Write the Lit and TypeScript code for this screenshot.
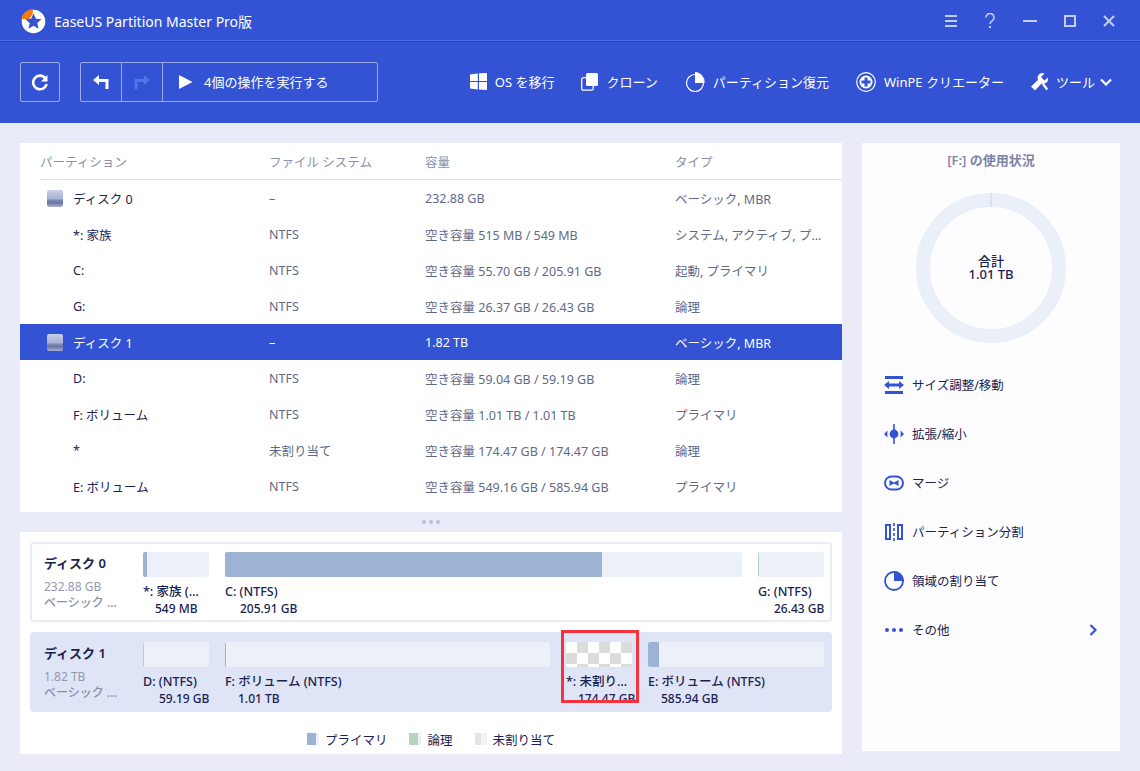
import { LitElement, html, css, svg } from "lit";
import { customElement } from "lit/decorators.js";

const tree = [
  { n: "ディスク 0", f: "–", c: "232.88 GB", t: "ベーシック, MBR", disk: true },
  { n: "*: 家族", f: "NTFS", c: "空き容量 515 MB / 549 MB", t: "システム, アクティブ, プライマリ" },
  { n: "C:", f: "NTFS", c: "空き容量 55.70 GB / 205.91 GB", t: "起動, プライマリ" },
  { n: "G:", f: "NTFS", c: "空き容量 26.37 GB / 26.43 GB", t: "論理" },
  { n: "ディスク 1", f: "–", c: "1.82 TB", t: "ベーシック, MBR", disk: true, sel: true },
  { n: "D:", f: "NTFS", c: "空き容量 59.04 GB / 59.19 GB", t: "論理" },
  { n: "F: ボリューム", f: "NTFS", c: "空き容量 1.01 TB / 1.01 TB", t: "プライマリ" },
  { n: "*", f: "未割り当て", c: "空き容量 174.47 GB / 174.47 GB", t: "論理" },
  { n: "E: ボリューム", f: "NTFS", c: "空き容量 549.16 GB / 585.94 GB", t: "プライマリ" },
];

type Seg = { w: number; fill: number; color: string; n: string; s: string; ind: number; un?: boolean; mark?: boolean };
const disks: { name: string; size: string; sel: boolean; segs: Seg[] }[] = [
  {
    name: "ディスク 0", size: "232.88 GB", sel: false,
    segs: [
      { w: 66, fill: 4, color: "#9db3d4", n: "*: 家族 (…", s: "549 MB", ind: 12 },
      { w: 517, fill: 377, color: "#9db3d4", n: "C: (NTFS)", s: "205.91 GB", ind: 15 },
      { w: 66, fill: 1, color: "#b9d1c0", n: "G: (NTFS)", s: "26.43 GB", ind: 16 },
    ],
  },
  {
    name: "ディスク 1", size: "1.82 TB", sel: true,
    segs: [
      { w: 66, fill: 1, color: "#b9d1c0", n: "D: (NTFS)", s: "59.19 GB", ind: 16 },
      { w: 325, fill: 1, color: "#9db3d4", n: "F: ボリューム (NTFS)", s: "1.01 TB", ind: 13 },
      { w: 66, fill: 0, color: "", n: "*: 未割り…", s: "174.47 GB", ind: 12, un: true, mark: true },
      { w: 176, fill: 11, color: "#9db3d4", n: "E: ボリューム (NTFS)", s: "585.94 GB", ind: 13 },
    ],
  },
];

const ic = (w: number, h: number, body: unknown) =>
  html`<svg width=${w} height=${h} viewBox="0 0 ${w} ${h}">${body}</svg>`;

const actionIcons = [
  ic(20, 20, svg`<g fill="#3353d4"><rect x="1" y="1" width="18" height="3"/><rect x="1" y="16" width="18" height="3"/><path d="M0 10l5-4v2.6h10V6l5 4-5 4v-2.6H5V14z"/></g>`),
  ic(20, 20, svg`<g fill="#3353d4"><rect x="9.2" y="0" width="1.6" height="20"/><circle cx="10" cy="10" r="4.4"/><path d="M0 10l3.4-3.6v7.2zM20 10l-3.4-3.6v7.2z"/></g>`),
  ic(20, 20, svg`<rect x="1" y="3.5" width="18" height="13" rx="6.5" fill="none" stroke="#3353d4" stroke-width="2"/><path d="M5.5 7v6l4-2.2h1l4 2.2V7l-4 2.2h-1z" fill="#3353d4"/>`),
  ic(20, 20, svg`<g fill="#3353d4"><path d="M1 2h6v16H1zM3 4v12h2V4z" fill-rule="evenodd"/><path d="M13 2h6v16h-6zM15 4v12h2V4z" fill-rule="evenodd"/><rect x="9.2" y="1" width="1.6" height="3"/><rect x="9.2" y="6" width="1.6" height="3"/><rect x="9.2" y="11" width="1.6" height="3"/><rect x="9.2" y="16" width="1.6" height="3"/></g>`),
  ic(20, 20, svg`<circle cx="10" cy="10" r="9" fill="none" stroke="#3353d4" stroke-width="1.8"/><path d="M10 10V0a10 10 0 0 1 10 10z" fill="#3353d4"/>`),
  ic(20, 20, svg`<g fill="#3353d4"><circle cx="3" cy="10" r="2"/><circle cx="10" cy="10" r="2"/><circle cx="17" cy="10" r="2"/></g>`),
];
const actions = ["サイズ調整/移動", "拡張/縮小", "マージ", "パーティション分割", "領域の割り当て", "その他"];

@customElement("app-root")
export class AppRoot extends LitElement {
  static styles = css`
    :host { display: block; width: 1140px; height: 771px; overflow: hidden; background: #e9ecf8;
      font-family: "Noto Sans", "Noto Sans CJK JP", sans-serif; font-size: 12.5px; color: #1a2350; }
    svg { display: block; flex: none; }
    .head { background: #3353d4; color: #fff; height: 123px; display: flex; flex-direction: column; }
    .titlebar { height: 41px; flex: none; display: flex; align-items: center; padding: 2px 20px 0 20px; box-sizing: border-box;
      border-bottom: 1px solid #4c6ce4; box-shadow: 0 1px 0 #2a45b8; }
    .title { margin-left: 8px; font-size: 14px; flex: 1; }
    .wc { display: flex; align-items: center; gap: 27px; margin-right: 5px; }
    .toolbar { flex: 1; display: flex; align-items: center; padding: 0 28px 1px 20px; }
    .btn { border: 1px solid rgba(255,255,255,.5); border-radius: 2px; height: 40px; box-sizing: border-box; display: flex; align-items: center; }
    .refresh { width: 40px; justify-content: center; margin-right: 20px; }
    .seg-b { width: 41px; height: 100%; display: flex; align-items: center; justify-content: center; border-right: 1px solid rgba(255,255,255,.5); box-sizing: border-box; }
    .run { width: 214px; display: flex; align-items: center; gap: 11px; padding-left: 16px; box-sizing: border-box; font-size: 13px; }
    .tools { margin-left: auto; display: flex; align-items: center; }
    .tool { display: flex; align-items: center; gap: 8px; font-size: 13px; margin-left: 27px; }
    .main { height: 648px; padding: 20px; box-sizing: border-box; display: flex; gap: 20px; }
    .left { width: 822px; display: flex; flex-direction: column; }
    .table { background: #fff; height: 369px; flex: none; }
    .row, .thead { display: grid; grid-template-columns: 229px 156px 250px 1fr; padding-left: 20px; align-items: center; }
    .thead { height: 37px; color: #8a90a8; position: relative; }
    .rule { height: 1px; margin: -1px 0 0 20px; background: #dfe1ec; }
    .row { height: 36px; color: #5f6a8a; }
    .row .name { color: #1a2350; display: flex; align-items: center; padding-left: 33px; position: relative; gap: 10px; }
    .row.disk .name { padding-left: 7px; }
    .row.sel { background: #3353d4; color: #fff; }
    .row.sel .name { color: #fff; }
    .row .type { padding-right: 12px; white-space: nowrap; overflow: hidden; text-overflow: ellipsis; }
    .hd { width: 16px; height: 17px; border-radius: 2px; background: linear-gradient(#c9d0ea 0%, #a9b2d6 50%, #7a85b4 62%, #6a759f 75%, #a9b2d6 100%); }
    .split { height: 20px; flex: none; display: flex; align-items: center; justify-content: center; gap: 3px; }
    .split i { width: 4px; height: 4px; border-radius: 50%; background: #b9bed2; }
    .bottom { background: #fff; flex: 1; padding: 10px 10px 0; display: flex; flex-direction: column; gap: 10px; }
    .card { height: 80px; box-sizing: border-box; border: 2px solid #ebedf6; border-radius: 4px; display: flex; padding: 8px 6px 0 12px; }
    .card.sel { background: #e0e4f7; border-color: #e0e4f7; }
    .info { width: 99px; flex: none; }
    .dname { font-weight: 600; font-size: 13px; height: 26px; padding-top: 1px; box-sizing: border-box; line-height: 20px; }
    .dsize { color: #9499b0; line-height: 16px; font-size: 12px; margin-top: 1px; }
    .dtype { color: #8a90a8; line-height: 16px; font-size: 12px; font-weight: 500; }
    .segs { display: flex; gap: 16px; }
    .seg { position: relative; }
    .bar { height: 25px; background: #ecf0f9; border-radius: 2px; overflow: hidden; }
    .bar i { display: block; height: 100%; }
    .bar.un { background: repeating-conic-gradient(#dcdcdc 0 25%, #fff 0 50%) 0 0 / 22px 22px; }
    .sn { font-weight: 500; font-size: 12.5px; line-height: 16px; margin-top: 7px; white-space: nowrap; }
    .ss { font-weight: 500; font-size: 12px; line-height: 16px; margin-top: 1px; white-space: nowrap; }
    .mark { position: absolute; left: -5px; right: -7px; top: -12px; height: 73px; box-sizing: border-box; border: 3px solid #f5333f; }
    .legend { display: flex; justify-content: center; align-items: center; height: 30px; margin-top: 2px; }
    .lg { display: flex; align-items: center; gap: 6px; margin-right: 22px; }
    .lg:last-child { margin-right: 0; }
    .lg i { width: 12px; height: 12px; }
    .right { width: 258px; background: #fdfdff; display: flex; flex-direction: column; align-items: stretch; }
    .rt { text-align: center; font-weight: 600; color: #7d84a3; font-size: 13px; padding-top: 8px; line-height: 18px; }
    .donut { width: 150px; height: 150px; margin: 24px auto 0; position: relative; display: flex; flex-direction: column; align-items: center; justify-content: center; font-size: 13px; line-height: 13px; font-weight: 500; }
    .donut svg { position: absolute; inset: 0; }
    .acts { margin-top: 17px; padding: 0 22px; }
    .act { height: 49px; display: flex; align-items: center; gap: 8px; }
    .act span { flex: 1; }
  `;

  render() {
    return html`
      <div class="head">
        <div class="titlebar">
          ${ic(26, 26, svg`<circle cx="13.5" cy="13.5" r="11.8" fill="#fff"/><path d="M1 11A12.5 12.5 0 0 1 13 1l-.5 5.5L9 11z" fill="#f47a10"/><path d="M13.5 5.5l2.4 5.2 5.6.6-4.2 3.8 1.2 5.6-5-2.9-5 2.9 1.2-5.6-4.2-3.8 5.6-.6z" fill="#3353d4"/>`)}
          <span class="title">EaseUS Partition Master Pro版</span>
          <div class="wc">
            ${ic(12, 12, svg`<g fill="#c3cdf2"><rect y="0" width="12" height="2"/><rect y="5" width="12" height="2"/><rect y="10" width="12" height="2"/></g>`)}
            ${ic(12, 16, svg`<path d="M2 4.5A4 4 0 1 1 8.5 7.5C7 8.6 6 9.3 6 11" fill="none" stroke="#c3cdf2" stroke-width="1.6"/><rect x="5" y="13" width="2" height="2" fill="#c3cdf2"/>`)}
            ${ic(14, 2, svg`<rect width="14" height="2" fill="#c3cdf2"/>`)}
            ${ic(12, 12, svg`<rect x="1" y="1" width="10" height="10" fill="none" stroke="#c3cdf2" stroke-width="2"/>`)}
            ${ic(12, 12, svg`<path d="M1 1l10 10M11 1L1 11" stroke="#c3cdf2" stroke-width="2"/>`)}
          </div>
        </div>
        <div class="toolbar">
          <div class="btn refresh">
            ${ic(18, 18, svg`<path d="M14.5 5.5A6.8 6.8 0 1 0 15.6 11" fill="none" stroke="#fff" stroke-width="2.6"/><path d="M16.5 2v6.5H10z" fill="#fff"/>`)}
          </div>
          <div class="btn">
            <div class="seg-b">${ic(18, 16, svg`<path d="M7 1L1 6l6 5V8h6.5v7H16.5V5H7z" fill="#fff"/>`)}</div>
            <div class="seg-b">${ic(18, 16, svg`<path d="M11 1l6 5-6 5V8H4.500v7H1.500V5H11z" fill="#5473e6"/>`)}</div>
            <div class="run">${ic(14, 14, svg`<path d="M0 0l13.500 7L0 14z" fill="#fff"/>`)}<span>4個の操作を実行する</span></div>
          </div>
          <div class="tools">
            <div class="tool">${ic(17, 17, svg`<g fill="#fff"><path d="M0 1.500L7.800.5v7.500H0zM9 .3L17 0v8H9zM0 9h7.800v7.500L0 15.500zM9 9h8v8l-8-.5z"/></g>`)}<span>OS を移行</span></div>
            <div class="tool">${ic(17, 18, svg`<rect x=".7" y="4.700" width="11.500" height="12.500" rx="1.500" fill="none" stroke="#fff" stroke-width="1.300"/><rect x="5" y="0" width="12" height="13" rx="1.500" fill="#fff"/>`)}<span>クローン</span></div>
            <div class="tool">${ic(20, 20, svg`<circle cx="10" cy="11" r="8.500" fill="none" stroke="#fff" stroke-width="1.200"/><path d="M10 11V0a10 10 0 0 1 9.500 11z" fill="#fff"/>`)}<span>パーティション復元</span></div>
            <div class="tool">${ic(20, 20, svg`<circle cx="10" cy="10" r="9.300" fill="none" stroke="#fff" stroke-width="1.200"/><circle cx="10" cy="10" r="6.500" fill="#fff"/><path d="M8.500 5.500h3v3h3v3h-3v3h-3v-3h-3v-3h3z" fill="#3353d4"/>`)}<span>WinPE クリエーター</span></div>
            <div class="tool">${ic(17, 18, svg`<path d="M11.500 0a5 5 0 0 0-4.500 7L0 13.500 4 17.500l6.500-7a5 5 0 0 0 6.500-6L13.500 7.500 10 4l3.500-3.500A5 5 0 0 0 11.500 0zM11 11.500l4.500 6 1.500-2-4.500-5.500z" fill="#fff"/>`)}<span>ツール</span>
              ${html`<span style="margin-left:-3px">${ic(12, 8, svg`<path d="M1 1.500l5 5 5-5" fill="none" stroke="#fff" stroke-width="2.200"/>`)}</span>`}</div>
          </div>
        </div>
      </div>
      <div class="main">
        <div class="left">
          <div class="table">
            <div class="thead"><span>パーティション</span><span>ファイル システム</span><span>容量</span><span>タイプ</span></div>
            <div class="rule"></div>
            ${tree.map(r => html`
              <div class="row ${r.disk ? "disk" : ""} ${r.sel ? "sel" : ""}">
                <div class="name">${r.disk ? html`<i class="hd"></i>` : ""}<span>${r.n}</span></div>
                <span>${r.f}</span><span>${r.c}</span><span class="type">${r.t}</span>
              </div>`)}
          </div>
          <div class="split"><i></i><i></i><i></i></div>
          <div class="bottom">
            ${disks.map(d => html`
              <div class="card ${d.sel ? "sel" : ""}">
                <div class="info">
                  <div class="dname">${d.name}</div>
                  <div class="dsize">${d.size}</div>
                  <div class="dtype">ベーシック ...</div>
                </div>
                <div class="segs">
                  ${d.segs.map(s => html`
                    <div class="seg" style="width:${s.w}px">
                      <div class="bar ${s.un ? "un" : ""}"><i style="width:${s.fill}px;background:${s.color}"></i></div>
                      <div class="sn">${s.n}</div>
                      <div class="ss" style="padding-left:${s.ind}px">${s.s}</div>
                      ${s.mark ? html`<div class="mark"></div>` : ""}
                    </div>`)}
                </div>
              </div>`)}
            <div class="legend">
              <div class="lg"><i style="background:linear-gradient(90deg,#9db3d4 75%,#ecf0f9 75%)"></i><span>プライマリ</span></div>
              <div class="lg"><i style="background:linear-gradient(90deg,#b9d1c0 75%,#ecf0f9 75%)"></i><span>論理</span></div>
              <div class="lg"><i style="background:linear-gradient(90deg,#e4e4e4 50%,#f4f4f4 50%)"></i><span>未割り当て</span></div>
            </div>
          </div>
        </div>
        <div class="right">
          <div class="rt">[F:] の使用状況</div>
          <div class="donut">
            ${ic(150, 150, svg`<circle cx="75" cy="75" r="68" fill="none" stroke="#ebeff8" stroke-width="14"/><rect x="74.500" y="0" width="1" height="14" fill="#cdd5ec"/>`)}
            <span>合計</span><span>1.01 TB</span>
          </div>
          <div class="acts">
            ${actions.map((a, i) => html`
              <div class="act">${actionIcons[i]}<span>${a}</span>
                ${i === 5 ? ic(9, 12, svg`<path d="M1.500 1l5 5-5 5" fill="none" stroke="#3353d4" stroke-width="2.200"/>`) : ""}
              </div>`)}
          </div>
        </div>
      </div>
    `;
  }
}
